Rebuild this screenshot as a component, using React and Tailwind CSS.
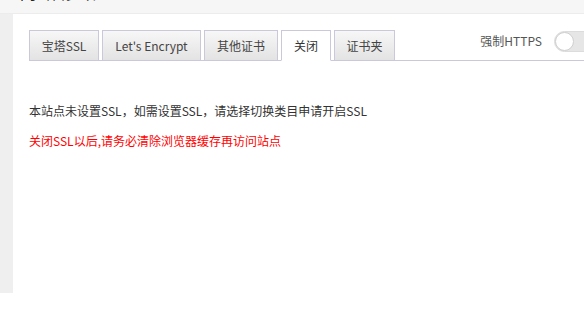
import React from "react";

const tabs = [
  { label: "宝塔SSL", w: "w-[70px]" },
  { label: "Let's Encrypt", w: "w-[99px]" },
  { label: "其他证书", w: "w-[74px]" },
  { label: "关闭", w: "w-[50px]", active: true },
  { label: "证书夹", w: "w-[61px]" },
];

export default function App() {
  return (
    <div
      className="w-[584px] h-[327px] bg-white overflow-hidden text-[12px] text-[#333]"
      style={{ fontFamily: '"Noto Sans CJK SC", "Noto Sans", sans-serif' }}
    >
      <div className="h-[14px] bg-[#f6f6f6] border-b border-[#ececec] overflow-hidden pl-[20px]">
        <div className="text-[16px] leading-[16px] -mt-[16px] text-[#222] tracking-[4px]">网站修改</div>
      </div>
      <div className="flex h-[279px]">
        <div className="w-[13px] bg-[#efefef]" />
        <div className="flex-1 bg-white pl-[16px] pt-[15px]">
          <div className="flex items-end border-b border-[#cbc8db] h-[32px]">
            {tabs.map((t) => (
              <div
                key={t.label}
                className={`${t.w} h-[31px] mr-[3px] -mb-px flex items-center justify-center border border-[#cbc8db] ${
                  t.active
                    ? "bg-white border-b-white text-[#333]"
                    : "bg-gradient-to-b from-[#f7f7f7] to-[#e3e3e3] text-[#444]"
                }`}
              >
                {t.label}
              </div>
            ))}
            <div className="flex-1" />
            <div className="self-start flex items-center h-[24px] -mr-[20px]">
              <span className="text-[#555] mr-[12px]">强制HTTPS</span>
              <div className="w-[50px] h-[21px] rounded-full bg-[#e6e6e6] border border-[#dcdcdc] relative">
                <div className="absolute left-0 top-0 w-[19px] h-[19px] rounded-full bg-white border border-[#cfcfcf]" />
              </div>
            </div>
          </div>
          <div className="mt-[41px] text-[#333] leading-[18px]">
            本站点未设置SSL，如需设置SSL，请选择切换类目申请开启SSL
          </div>
          <div className="mt-[12px] text-[#ff0000] leading-[18px]">
            关闭SSL以后,请务必清除浏览器缓存再访问站点
          </div>
        </div>
      </div>
    </div>
  );
}
